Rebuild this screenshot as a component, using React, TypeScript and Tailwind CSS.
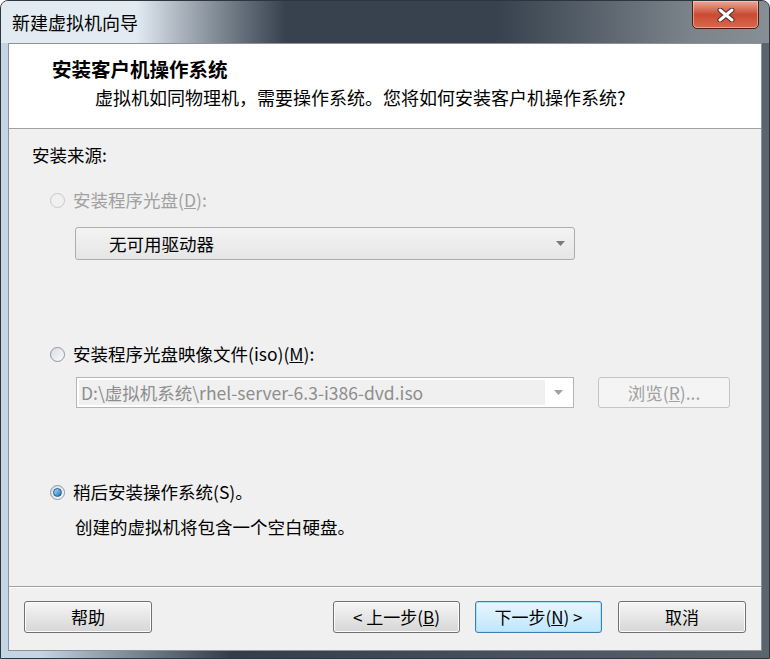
const font = { fontFamily: '"Noto Sans CJK SC", "Liberation Sans", sans-serif' };

const Radio = ({ checked, disabled }: { checked?: boolean; disabled?: boolean }) => (
  <span
    className={
      'relative inline-flex h-[15px] w-[15px] shrink-0 items-center justify-center rounded-full border ' +
      (disabled
        ? 'border-[#c8c8c8] bg-[#f0f0f0]'
        : 'border-[#8c96a0] bg-gradient-to-br from-[#d8dde2] to-[#fbfbfb]')
    }
  >
    {checked && (
      <span className="h-[9px] w-[9px] rounded-full border border-[#1d5a8c] bg-gradient-to-br from-[#a6e0fd] to-[#1a72b8]" />
    )}
  </span>
);

const Arrow = ({ color = '#7a7a7a' }: { color?: string }) => (
  <svg width="9" height="5" viewBox="0 0 9 5">
    <path d="M0 0h9L4.5 5z" fill={color} />
  </svg>
);

const Btn = ({ children, focused, w }: { children: React.ReactNode; focused?: boolean; w: string }) => (
  <div
    className={
      'flex h-[32px] items-center justify-center rounded-[3px] border text-[17px] text-black ' +
      w +
      ' ' +
      (focused
        ? 'border-[#3c7fb1] bg-gradient-to-b from-[#eaf6fd] to-[#bee6fd] shadow-[inset_0_0_0_1px_#a8e2fb]'
        : 'border-[#707070] bg-gradient-to-b from-[#f6f6f6] via-[#e6e6e6] to-[#d6d6d6] shadow-[inset_0_0_0_1px_#fcfcfc]')
    }
  >
    {children}
  </div>
);

export default function App() {
  return (
    <div
      className="flex h-[659px] w-[770px] flex-col overflow-hidden rounded-t-[8px] border border-[#2e353d] bg-gradient-to-r from-[#c6d5e4] from-5% via-[#333d48] via-30% to-[#5c656e]"
      style={font}
    >
      <div className="flex h-[42px] shrink-0 items-start">
        <div className="h-full w-[300px] bg-gradient-to-r from-[#e2eaf2] from-45% to-[#37424e] to-95% pl-[11px] pt-[10px] text-[18px] leading-[22px] text-black">
          新建虚拟机向导
        </div>
        <div className="h-full flex-1 bg-gradient-to-r from-[#37424e] from-50% to-[#7c848b]" />
        <div className="relative h-full w-[77px] bg-gradient-to-r from-[#7c848b] to-[#878f96]">
          <div className="absolute left-0 top-[-1px] flex h-[29px] w-[67px] items-center justify-center rounded-b-[5px] border border-[#4b1d14] bg-gradient-to-b from-[#e9a897] via-[#c94a32] to-[#d7694c] shadow-[inset_0_0_0_1px_rgba(255,220,210,0.5)]">
            <svg width="18" height="14" viewBox="0 0 18 14">
              <path d="M3 2l12 10M15 2L3 12" stroke="#4a2a24" strokeWidth="5" strokeLinecap="round" />
              <path d="M3 2l12 10M15 2L3 12" stroke="#fff" strokeWidth="3" strokeLinecap="round" />
            </svg>
          </div>
        </div>
      </div>

      <div className="mx-[7px] mb-[7px] flex flex-1 flex-col border border-[#8a939b] bg-[#f0f0f0]">
        <div className="h-[85px] shrink-0 border-b border-[#a0a0a0] bg-white">
          <div className="pl-[43px] pt-[13px] text-[19.5px] font-bold leading-[24px] text-black">安装客户机操作系统</div>
          <div className="pl-[86px] pt-[5px] text-[18px] leading-[22px] text-black">
            虚拟机如同物理机，需要操作系统。您将如何安装客户机操作系统?
          </div>
        </div>

        <div className="flex-1 text-[17.5px] leading-[20px] text-black">
          <div className="pl-[23px] pt-[16px]">安装来源:</div>

          <div className="mt-[25px] flex items-center gap-[8px] pl-[41px] text-[#a0a0a0]">
            <Radio disabled />
            <span>
              安装程序光盘(<span className="underline">D</span>):
            </span>
          </div>

          <div className="ml-[66px] mt-[17px] flex h-[33px] w-[500px] items-center justify-between rounded-[3px] border border-[#adadad] bg-gradient-to-b from-[#f3f3f3] to-[#e6e6e6] pl-[33px] pr-[9px]">
            <span>无可用驱动器</span>
            <Arrow />
          </div>

          <div className="mt-[84px] flex items-center gap-[8px] pl-[41px]">
            <Radio />
            <span>
              安装程序光盘映像文件(iso)(<span className="underline">M</span>):
            </span>
          </div>

          <div className="mt-[13px] flex items-center pl-[67px]">
            <div className="flex h-[31px] w-[498px] items-center border border-[#b5b5b5] bg-white p-[2px]">
              <div className="flex h-full w-[466px] items-center bg-[#f0f0f0] pl-[2px] text-[#8d8d8d]">
                D:\虚拟机系统\rhel-server-6.3-i386-dvd.iso
              </div>
              <div className="flex flex-1 items-center justify-center">
                <Arrow color="#a0a0a0" />
              </div>
            </div>
            <div className="ml-[24px] flex h-[31px] w-[132px] items-center justify-center rounded-[3px] border border-[#c4c4c4] bg-[#f4f4f4] text-[#a0a0a0]">
              浏览(<span className="underline">R</span>)...
            </div>
          </div>

          <div className="mt-[74px] flex items-center gap-[8px] pl-[41px]">
            <Radio checked />
            <span>稍后安装操作系统(S)。</span>
          </div>

          <div className="mt-[15px] pl-[66px]">创建的虚拟机将包含一个空白硬盘。</div>
        </div>

        <div className="h-[2px] shrink-0 border-t border-[#a0a0a0] bg-white" />

        <div className="flex h-[62px] shrink-0 items-start pt-[13px] pl-[15px] pr-[15px]">
          <Btn w="w-[128px]">帮助</Btn>
          <div className="flex-1" />
          <Btn w="w-[127px]">
            &lt; 上一步(<span className="underline">B</span>)
          </Btn>
          <div className="w-[15px]" />
          <Btn w="w-[127px]" focused>
            下一步(<span className="underline">N</span>) &gt;
          </Btn>
          <div className="w-[16px]" />
          <Btn w="w-[128px]">取消</Btn>
        </div>
      </div>
    </div>
  );
}
